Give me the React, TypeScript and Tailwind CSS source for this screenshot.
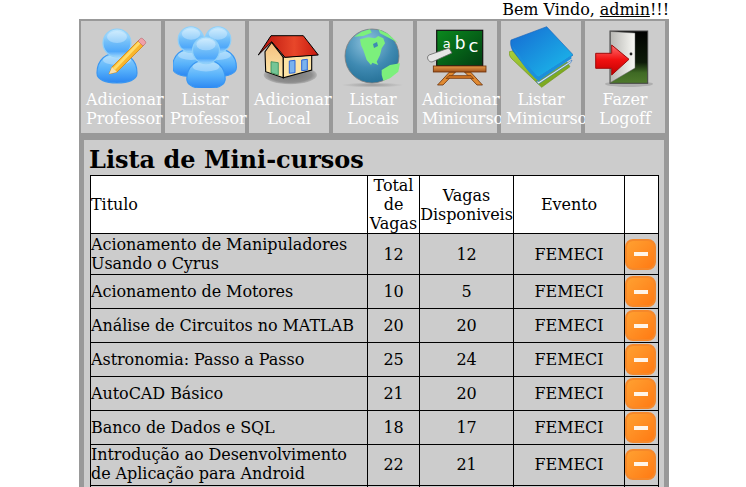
const rows = [
  { titulo: "Acionamento de Manipuladores Usando o Cyrus", total: 12, vagas: 12 },
  { titulo: "Acionamento de Motores", total: 10, vagas: 5 },
  { titulo: "Análise de Circuitos no MATLAB", total: 20, vagas: 20 },
  { titulo: "Astronomia: Passo a Passo", total: 25, vagas: 24 },
  { titulo: "AutoCAD Básico", total: 21, vagas: 20 },
  { titulo: "Banco de Dados e SQL", total: 18, vagas: 17 },
  { titulo: "Introdução ao Desenvolvimento de Aplicação para Android", total: 22, vagas: 21, up: true },
  { titulo: "Java Básico", total: 20, vagas: 19 },
];

function PersonDefs({ id }: { id: string }) {
  return (
    <defs>
      <linearGradient id={id} x1="0" y1="0" x2="0" y2="1">
        <stop offset="0" stopColor="#c4e9fe" />
        <stop offset="0.45" stopColor="#74c0f9" />
        <stop offset="0.8" stopColor="#4fa8fa" />
        <stop offset="1" stopColor="#9ed6fc" />
      </linearGradient>
      <linearGradient id={id + "b"} x1="0" y1="0" x2="0" y2="1">
        <stop offset="0" stopColor="#9ad6fb" />
        <stop offset="0.55" stopColor="#58b2fb" />
        <stop offset="1" stopColor="#2a86f2" />
      </linearGradient>
    </defs>
  );
}

function Person({ x, y, s, id }: { x: number; y: number; s: number; id: string }) {
  return (
    <g transform={`translate(${x} ${y}) scale(${s})`}>
      <path d="M-20 22C-20 8-10 2 0 2s20 6 20 20c0 7-9 10-20 10s-20-3-20-10z" fill={`url(#${id}b)`} stroke="#3a97f2" strokeWidth="1.2" />
      <ellipse cx="0" cy="9" rx="14" ry="5" fill="#fff" opacity="0.3" />
      <circle cx="0" cy="-8" r="14" fill={`url(#${id})`} stroke="#8fd0f9" strokeWidth="1.2" />
      <ellipse cx="0" cy="-14" rx="10" ry="6" fill="#fff" opacity="0.3" />
    </g>
  );
}

function IconAddPerson() {
  return (
    <svg width="64" height="64" viewBox="0 0 64 64">
      <PersonDefs id="p1" />
      <Person x={28} y={27} s={1} id="p1" />
      <path d="M20 50l3-7 27-27 5 5-27 27z" fill="#f9b62c" stroke="#d08515" strokeWidth="0.8" />
      <path d="M24 44l26-27 2 2-26 27z" fill="#ffdc6a" />
      <path d="M20 50l3-7 5 5z" fill="#f6dfae" />
      <path d="M49 17l2-2c1-1 2-1 3 0l2 2c1 1 1 2 0 3l-2 2z" fill="#f0a0a8" stroke="#b8626a" strokeWidth="0.6" />
    </svg>
  );
}

function IconPeople() {
  return (
    <svg width="64" height="64" viewBox="0 0 64 64">
      <PersonDefs id="p2" />
      <Person x={18} y={23} s={0.92} id="p2" />
      <Person x={45} y={23} s={0.92} id="p2" />
      <Person x={33} y={34} s={0.96} id="p2" />
    </svg>
  );
}

function IconHouse() {
  return (
    <svg width="64" height="64" viewBox="0 0 64 64">
      <defs>
        <linearGradient id="roof" x1="0" y1="0" x2="1" y2="0">
          <stop offset="0" stopColor="#b50f0a" />
          <stop offset="0.6" stopColor="#e8472a" />
          <stop offset="1" stopColor="#c8180e" />
        </linearGradient>
        <linearGradient id="wall" x1="0" y1="0" x2="0" y2="1">
          <stop offset="0" stopColor="#f5bf7c" />
          <stop offset="1" stopColor="#fdeaae" />
        </linearGradient>
        <radialGradient id="shadow">
          <stop offset="0" stopColor="#777" />
          <stop offset="0.8" stopColor="#8e8e8e" />
          <stop offset="1" stopColor="#b4b4b4" />
        </radialGradient>
      </defs>
      <ellipse cx="33.3" cy="51" rx="26.7" ry="9.3" fill="url(#shadow)" />
      <path d="M8 27.7L14.7 18.3 26.3 33.3V53.7L8.7 47.7z" fill="url(#wall)" stroke="#000" strokeWidth="1.1" />
      <path d="M26.3 33.3L54.7 31V46L26.3 53.7z" fill="#fde3a4" stroke="#000" strokeWidth="1.1" />
      <path d="M1.3 31L14 11.7H46.3L61.3 31 28 33.3 14.7 17.7z" fill="url(#roof)" stroke="#000" strokeWidth="1" strokeLinejoin="round" />
      <path d="M14 37.7L21.3 38.7V51L14 48.7z" fill="#74c596" stroke="#2f8a58" strokeWidth="0.8" />
      <path d="M32.3 37L38 36.3V48.7L32.3 49.3z" fill="#7ab2ee" stroke="#2a64d8" strokeWidth="1" />
      <path d="M44.7 36L50.3 35.3V46L44.7 46.7z" fill="#7ab2ee" stroke="#2a64d8" strokeWidth="1" />
    </svg>
  );
}

function IconGlobe() {
  return (
    <svg width="64" height="64" viewBox="0 0 64 64">
      <defs>
        <radialGradient id="sea" cx="0.42" cy="0.25" r="0.85">
          <stop offset="0" stopColor="#8fc3de" />
          <stop offset="0.55" stopColor="#3f8ab2" />
          <stop offset="1" stopColor="#1f6a90" />
        </radialGradient>
        <radialGradient id="gshadow">
          <stop offset="0" stopColor="#9a9a9a" />
          <stop offset="1" stopColor="#cccccc" />
        </radialGradient>
      </defs>
      <ellipse cx="31.5" cy="61" rx="31" ry="2.5" fill="url(#gshadow)" />
      <circle cx="31" cy="32" r="27" fill="url(#sea)" stroke="#7d7d7d" strokeWidth="0.8" />
      <g fill="#7cf07c">
        <path d="M19 15.3L27.3 13.3 34 14.3 37.3 12 42.3 14.3 44 19.3 40.7 24.3 39 31 35.7 37.7 37.3 41 31.3 38.7 30 41 25.7 36 22.3 26 20 21z" />
        <path d="M13.3 12.7L20.7 7.7 29 5.3 30.7 8.7 22.3 12z" />
        <path d="M37.3 5.3L47.3 10 57.3 19.3 53.3 16.7 45.7 12.7 39 9.3z" />
        <path d="M40.7 46L49 41 59 39.3 57.3 47.7 49 54.3 42.3 56.7 40.7 51z" />
      </g>
      <path d="M32 20L36 18 37 22 33 24z" fill="#3f8ab2" />
    </svg>
  );
}

function IconBoard() {
  return (
    <svg width="64" height="64" viewBox="0 0 64 64">
      <defs>
        <linearGradient id="chalk" x1="0" y1="0" x2="1" y2="1">
          <stop offset="0" stopColor="#0a8a1e" />
          <stop offset="1" stopColor="#023d12" />
        </linearGradient>
        <linearGradient id="wood" x1="0" y1="0" x2="0" y2="1">
          <stop offset="0" stopColor="#e89a4a" />
          <stop offset="1" stopColor="#a0521a" />
        </linearGradient>
      </defs>
      <rect x="11.7" y="6.3" width="46" height="35.5" fill="url(#chalk)" stroke="#111" strokeWidth="1.2" />
      <g fill="#fff" fontFamily="'DejaVu Sans',sans-serif" textAnchor="middle">
        <text x="21.7" y="24" fontSize="13">a</text>
        <text x="35" y="25" fontSize="17">b</text>
        <text x="48.3" y="28" fontSize="18">c</text>
      </g>
      <path d="M4 31L24 24 27 29 7 38C3 38 1 33 4 31z" fill="#e6e6e6" stroke="#666" strokeWidth="0.8" />
      <path d="M24.5 48L12.5 61H18L30.5 48zM39.5 48L52 61H57.5L45.5 48z" fill="#e08a32" stroke="#6b3008" strokeWidth="0.8" />
      <path d="M24 51.5H46L48.5 54.5H21z" fill="#c86f20" stroke="#6b3008" strokeWidth="0.6" />
      <rect x="8.3" y="42" width="52.7" height="6" fill="url(#wood)" stroke="#6b3008" strokeWidth="0.8" />
    </svg>
  );
}

function IconBooks() {
  return (
    <svg width="64" height="64" viewBox="0 0 64 64">
      <defs>
        <linearGradient id="book" x1="0" y1="0" x2="1" y2="1">
          <stop offset="0" stopColor="#1669d2" />
          <stop offset="1" stopColor="#1cc0ec" />
        </linearGradient>
        <linearGradient id="green" x1="0" y1="0" x2="1" y2="1">
          <stop offset="0" stopColor="#a9cf3a" />
          <stop offset="1" stopColor="#6f9c18" />
        </linearGradient>
      </defs>
      <path d="M.3 27.7C0 31 1 33 3 35L32.7 63.3 61 42.7 58 38 30 54 8 26z" fill="url(#green)" stroke="#6c9318" strokeWidth="0.6" />
      <path d="M2 16L37.7 2.7 64.3 31 29.3 53.3C25 52 22 50 19 46L4 27C2 24 1 19 2 16z" fill="url(#book)" stroke="#1460b8" strokeWidth="0.6" />
      <path d="M3 21C4 24 20 43 29.3 53.3L62 31.5 62.5 34.5 29.5 57C20 50 8 33 3 21z" fill="#1c8fdc" />
      <path d="M30 57.5L63 36 62 38.5 29.5 60 27 57z" fill="#dfe9ef" stroke="#1460b8" strokeWidth="0.5" />
    </svg>
  );
}

function IconDoor() {
  return (
    <svg width="64" height="64" viewBox="0 0 64 64">
      <defs>
        <linearGradient id="dark" x1="0" y1="0" x2="0" y2="1">
          <stop offset="0" stopColor="#000" />
          <stop offset="0.6" stopColor="#0d1a08" />
          <stop offset="0.8" stopColor="#3f6a24" />
          <stop offset="1" stopColor="#4f7a2c" />
        </linearGradient>
        <linearGradient id="leaf" x1="0" y1="0" x2="1" y2="0">
          <stop offset="0" stopColor="#b8b8b4" />
          <stop offset="1" stopColor="#f8f8f4" />
        </linearGradient>
        <linearGradient id="arrow" x1="0" y1="0" x2="0" y2="1">
          <stop offset="0" stopColor="#ff7070" />
          <stop offset="0.5" stopColor="#f01010" />
          <stop offset="1" stopColor="#c00000" />
        </linearGradient>
      </defs>
      <ellipse cx="36" cy="60" rx="24" ry="3" fill="#aeaeae" />
      <rect x="17" y="7" width="37.7" height="52.3" fill="url(#dark)" stroke="#444" strokeWidth="1" />
      <path d="M17.5 7.5L42 9V44L17.5 58.5z" fill="url(#leaf)" stroke="#666" strokeWidth="0.5" />
      <circle cx="38" cy="30" r="1.4" fill="#222" />
      <path d="M2.7 29.3H18.7V21L36 35.3 18.7 51V44.3H2.7z" fill="url(#arrow)" stroke="#a00a0a" strokeWidth="1" />
    </svg>
  );
}

const menu = [
  { l1: "Adicionar", l2: "Professor", icon: <IconAddPerson /> },
  { l1: "Listar", l2: "Professor", icon: <IconPeople /> },
  { l1: "Adicionar", l2: "Local", icon: <IconHouse /> },
  { l1: "Listar", l2: "Locais", icon: <IconGlobe /> },
  { l1: "Adicionar", l2: "Minicurso", icon: <IconBoard /> },
  { l1: "Listar", l2: "Minicurso", icon: <IconBooks /> },
  { l1: "Fazer", l2: "Logoff", icon: <IconDoor /> },
];

function RemoveButton() {
  return (
    <div className="flex size-[31px] items-center justify-center rounded-[8px] border-2 border-[#f5882a] bg-gradient-to-br from-[#ffa030] to-[#ff7a12]">
      <div className="h-[4px] w-[14px] bg-[#fff4e8]" />
    </div>
  );
}

export default function App() {
  return (
    <div className="h-[487px] overflow-hidden bg-white font-['DejaVu_Serif',serif] text-[16px] leading-[19px] tracking-[-0.06px] text-black">
      <div className="ml-[79px] w-[590px]">
        <div className="h-[19px] text-right">
          Bem Vindo, <a className="underline">admin</a>!!!
        </div>
        <div className="h-[468px] bg-[#999999] px-[5px] pt-[2px]">
          <div className="-ml-[3px] flex gap-[4px]">
            {menu.map((m, i) => (
              <div key={i} className="h-[112px] w-[80px] shrink-0 bg-[#cccccc] px-[5px] pt-[3px] text-center text-white">
                <div className="flex h-[66px] justify-center">{m.icon}</div>
                <div className="whitespace-nowrap">{m.l1}</div>
                <div className="whitespace-nowrap">{m.l2}</div>
              </div>
            ))}
          </div>
          <div className="mt-[7px] h-[400px] bg-[#cccccc] pl-[6px] pr-[4px] pt-[5px]">
            <h2 className="-ml-[1px] mb-[1px] h-[29px] text-[24px] font-bold leading-[29px] tracking-normal">Lista de Mini-cursos</h2>
            <table className="w-[568px] table-fixed border-collapse border border-black">
              <colgroup>
                <col className="w-[277px]" />
                <col className="w-[52px]" />
                <col className="w-[94px]" />
                <col className="w-[111px]" />
                <col className="w-[34px]" />
              </colgroup>
              <thead className="bg-white">
                <tr>
                  <td className="border border-black text-left">Titulo</td>
                  <td className="border border-black text-center">Total de Vagas</td>
                  <td className="border border-black text-center">Vagas Disponiveis</td>
                  <td className="border border-black text-center">Evento</td>
                  <td className="border border-black" />
                </tr>
              </thead>
              <tbody>
                {rows.map((r) => (
                  <tr key={r.titulo}>
                    <td className={r.up ? "border border-black pb-[2px] pt-0" : "border border-black py-[1px]"}>{r.titulo}</td>
                    <td className={r.up ? "border border-black pb-[2px] text-center" : "border border-black text-center"}>{r.total}</td>
                    <td className={r.up ? "border border-black pb-[2px] text-center" : "border border-black text-center"}>{r.vagas}</td>
                    <td className={r.up ? "border border-black pb-[2px] text-center" : "border border-black text-center"}>FEMECI</td>
                    <td className={r.up ? "border border-black pb-[2px] pr-[1px] pt-0" : "border border-black py-[1px] pr-[1px]"}><RemoveButton /></td>
                  </tr>
                ))}
              </tbody>
            </table>
          </div>
        </div>
      </div>
    </div>
  );
}
